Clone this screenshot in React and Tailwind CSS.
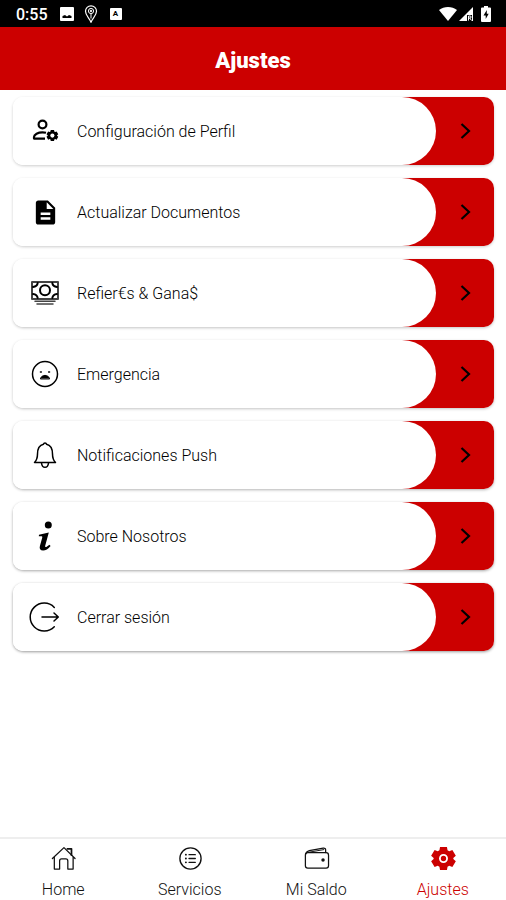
import React from "react";
import { MdDescription } from "react-icons/md";

function Icon({ children, className = "h-8 w-8", box = "0 0 32 32", width = "1.5" }) {
  return (
    <svg
      aria-hidden="true"
      viewBox={box}
      className={className}
      fill="none"
      stroke="currentColor"
      strokeWidth={width}
      strokeLinecap="round"
      strokeLinejoin="round"
    >
      {children}
    </svg>
  );
}

const gear =
  "M9.4 1h7.2l.6 3.4 1.8 1 3.2-1.200 3.600 6-2.600 2.200v1.200l2.600 2.200-3.600 6-3.200-1.200-1.800 1-.6 3.400H9.400l-.6-3.400-1.800-1-3.200 1.200-3.600-6 2.600-2.200v-1.200L.2 10.200l3.600-6L7 5.400l1.800-1z";

const ProfileIcon = () => (
  <Icon width="2.2">
    <circle cx="13.5" cy="9.5" r="3.900" />
    <path d="M17 17.800c-1.200-.3-2.400-.4-3.500-.4-4.500 0-8.500 2-8.500 4.700v1.500h11" strokeLinecap="butt" />
    <g transform="translate(17.4 14.6) scale(.46)">
      <path d={gear} fill="currentColor" stroke="none" />
      <circle cx="13" cy="13" r="4.5" fill="white" stroke="none" />
    </g>
  </Icon>
);

const MoneyIcon = () => (
  <Icon>
    <path d="M3 5h26v17H3z" strokeWidth="2" stroke="#444" />
    <circle cx="16" cy="13.3" r="5" strokeWidth="2" />
    <path d="M4 10c2.700-.3 4.400-2 4.700-4M28 10c-2.700-.3-4.400-2-4.700-4M4 17c2.700.3 4.400 2 4.700 4M28 17c-2.700.3-4.400 2-4.700 4" strokeWidth="1.900" />
    <path d="M6 24.300h20M8 27h16" stroke="#444" />
  </Icon>
);

const FrownIcon = () => (
  <Icon>
    <circle cx="16" cy="16" r="12.5" />
    <path d="M11.500 20.600c.6-2.200 2.300-3.200 4.500-3.200s3.900 1 4.500 3.200z" fill="currentColor" strokeWidth="1" />
    <path d="M11.500 14h.8M20.500 14h-.8" strokeWidth="1.600" />
  </Icon>
);

const BellIcon = () => (
  <Icon>
    <path d="M5.500 23.500c2.200-2.300 3-4.500 3-8.500 0-5.500 2.300-9 6-9.800.3-1.500 2.700-1.500 3 0 3.700.8 6 4.300 6 9.800 0 4 .8 6.200 3 8.500z" />
    <path d="M12.500 24c.3 3 1.700 4.300 3.500 4.300s3.200-1.300 3.500-4.300" />
  </Icon>
);

const InfoIcon = () => (
  <Icon>
    <circle cx="19.300" cy="5" r="3.500" fill="currentColor" stroke="none" />
    <path
      d="M10 14.800l9.800-2.300-3.600 13.300c-.3 1.300.6 1.500 1.500.9.900-.5 1.800-1.200 2.700-2l1.200 1.200c-2.400 2.900-5 4.600-7.500 4.600-2.800 0-4-1.600-3.200-4.500l2.300-8.300c.3-1.200-.2-1.600-1.400-1.500l-2 .1z"
      fill="currentColor"
      stroke="none"
    />
  </Icon>
);

const LogoutIcon = () => (
  <Icon>
    <path d="M25.300 6.400a14 14 0 1 0 0 19.400" />
    <path d="M13 16h16M25 12l4.300 4-4.300 4" />
  </Icon>
);

const items = [
  { label: "Configuración de Perfil", icon: <ProfileIcon />, shadow: "shadow-[0_1px_3px_rgba(0,0,0,0.2)]" },
  { label: "Actualizar Documentos", icon: <MdDescription className="h-[29px] w-[29px]" />, shadow: "shadow-[0_1px_3px_rgba(0,0,0,0.2)]" },
  { label: "Refier€s & Gana$", icon: <MoneyIcon />, shadow: "shadow-[0_1px_3px_rgba(0,0,0,0.24)]" },
  { label: "Emergencia", icon: <FrownIcon />, shadow: "shadow-[0_1px_3px_rgba(0,0,0,0.24)]" },
  { label: "Notificaciones Push", icon: <BellIcon />, shadow: "shadow-[0_1px_3px_rgba(0,0,0,0.3)]" },
  { label: "Sobre Nosotros", icon: <InfoIcon />, shadow: "shadow-[0_1px_3px_rgba(0,0,0,0.35)]" },
  { label: "Cerrar sesión", icon: <LogoutIcon />, shadow: "shadow-[0_1px_3px_rgba(0,0,0,0.4)]" },
];

const HomeIcon = () => (
  <Icon className="h-7 w-7" box="0 0 28 28" width="1.3">
    <path d="M3 14L15 2.700 26.500 14M5 12.500V25h5.500v-8.500q0-2 2-2h4.500q2 0 2 2V25h5.500V12.500" />
    <path d="M18.500 4h4.300v6.500" strokeWidth="1.800" />
  </Icon>
);

const ListIcon = () => (
  <Icon className="h-7 w-7" box="0 0 28 28" width="1.4">
    <circle cx="14.500" cy="14" r="11" />
    <path d="M13 10h6.500M13 14h6.500M13 18h6.500" />
    <path d="M9.700 10h.1M9.700 14h.1M9.700 18h.1" strokeWidth="1.900" />
  </Icon>
);

const WalletIcon = () => (
  <Icon className="h-7 w-7" box="0 0 28 28" width="1.3">
    <rect x="3" y="8" width="24" height="16" rx="2.500" />
    <path d="M3.300 9C4 7 5 6.300 7 5.900L21.500 3.300q2.500-.3 2.500 2v2.500" />
    <path d="M6 7.600l16-2.800" strokeWidth="1" />
    <circle cx="21.300" cy="15.500" r="1.800" fill="currentColor" stroke="none" />
  </Icon>
);

const GearIcon = () => (
  <Icon className="h-7 w-7" box="-1.500 -1 28 28">
    <path d={gear} fill="currentColor" stroke="none" />
    <circle cx="13" cy="13" r="3.700" stroke="white" strokeWidth="1.900" />
  </Icon>
);

const tabs = [
  { label: "Home", icon: <HomeIcon /> },
  { label: "Servicios", icon: <ListIcon /> },
  { label: "Mi Saldo", icon: <WalletIcon /> },
  { label: "Ajustes", icon: <GearIcon />, active: true },
];

function StatusBar() {
  return (
    <div className="flex h-[27px] items-center bg-black pr-3 pl-4 text-white">
      <span className="pt-0.5 text-base font-medium">0:55</span>
      <svg aria-hidden="true" viewBox="0 0 14 14" className="ml-3 h-3.5 w-3.5">
        <rect width="14" height="14" rx="1" fill="white" />
        <path d="M2.500 11V9l2.500-1 2 1.500L9 8l2.500 1v2z" fill="black" />
      </svg>
      <svg aria-hidden="true" viewBox="0 0 14 20" className="ml-2.5 h-5 w-3.5" fill="none" stroke="white">
        <path d="M7 18.500C6 14.500 1.500 12 1.500 7.300a5.500 5.500 0 0 1 11 0C12.500 12 8 14.500 7 18.500z" strokeWidth="1.200" />
        <path d="M7 9.500v5" />
        <circle cx="7" cy="7" r="2.600" />
        <circle cx="7" cy="7" r=".8" fill="white" />
      </svg>
      <span className="ml-3 flex h-3 w-3 items-center justify-center rounded-[1px] bg-white text-[8px] font-bold text-black">
        A
      </span>
      <svg aria-hidden="true" viewBox="0 0 18 14" className="ml-auto h-3.5 w-[18px]">
        <path d="M0 3C5-1 13-1 18 3L9 14z" fill="white" />
      </svg>
      <svg aria-hidden="true" viewBox="0 0 14 14" className="ml-0.5 h-3.5 w-3.5">
        <path d="M14 0v14H0z" fill="white" />
        <path d="M8 8h5v6H8z" fill="black" />
        <path d="M9.500 13.500V9H11q1.200 0 1.200 1T11 11H9.500M10.700 11l1.800 2.500" stroke="white" fill="none" />
      </svg>
      <svg aria-hidden="true" viewBox="0 0 10 16" className="mr-[3px] ml-2 h-4 w-2.5">
        <path d="M3 0h4v1.500h2q1 0 1 1V15q0 1-1 1H1q-1 0-1-1V2.500q0-1 1-1h2z" fill="white" />
        <path d="M5.800 4L2.500 9.500h2.200V13l3-5.200H5.800z" fill="black" />
      </svg>
    </div>
  );
}

export default function App() {
  return (
    <div className="flex min-h-screen flex-col bg-white font-[Roboto,sans-serif] text-black">
      <StatusBar />
      <header className="flex h-[63px] items-center justify-center bg-[#cc0000] pt-1">
        <h1 className="text-[22px] font-black text-white">Ajustes</h1>
      </header>
      <main className="flex flex-col gap-[13px] pt-[7px] pr-3 pl-[13px]">
        {items.map((item) => (
          <button
            key={item.label}
            type="button"
            className={`flex h-[68px] items-center rounded-[10px] bg-linear-to-r from-white from-50% to-[#cc0000] to-50% text-left ${item.shadow}`}
          >
            <span className="flex h-full flex-1 items-center rounded-l-[10px] rounded-r-[34px] bg-white pl-4">
              <span className="flex w-8 shrink-0 justify-center">{item.icon}</span>
              <span className="ml-4 pt-0.5 text-base font-light">{item.label}</span>
            </span>
            <span className="flex w-[58px] justify-center">
              <Icon className="h-[18px] w-[18px]" box="0 0 18 18" width="2.2">
                <path d="M5.500 2L13 9l-7.500 7" strokeLinecap="butt" strokeLinejoin="miter" />
              </Icon>
            </span>
          </button>
        ))}
      </main>
      <nav className="mt-auto flex h-[63px] border-t-2 border-[#eeeeee]">
        {tabs.map((tab) => (
          <button
            key={tab.label}
            type="button"
            className={`flex flex-1 flex-col items-center gap-2 pt-1.5 ${tab.active ? "text-[#cc0000]" : "text-[#111111]"}`}
          >
            {tab.icon}
            <span className="text-base leading-5 font-light">{tab.label}</span>
          </button>
        ))}
      </nav>
    </div>
  );
}
